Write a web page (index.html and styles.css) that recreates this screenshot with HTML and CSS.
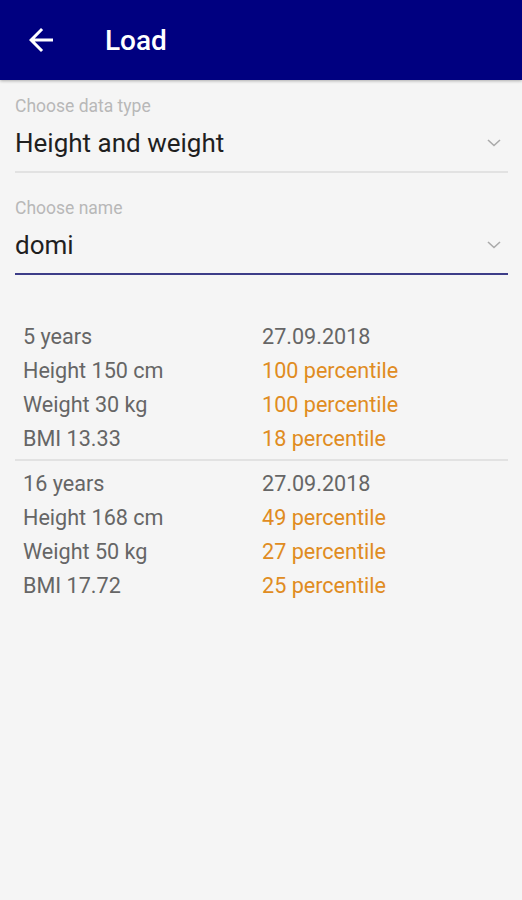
FILE: index.html
```html
<!DOCTYPE html>
<html>
<head>
<meta charset="utf-8">
<link rel="stylesheet" href="styles.css">
</head>
<body>
<header class="appbar">
  <svg class="back" width="36" height="36" viewBox="0 0 24 24"><path d="M20 11H7.83l5.59-5.59L12 4l-8 8 8 8 1.41-1.41L7.83 13H20v-2z" fill="#fff"/></svg>
  <h1 class="title">Load</h1>
</header>
<main class="content">
  <div class="field">
    <div class="label">Choose data type</div>
    <div class="value-row">
      <span class="value">Height and weight</span>
      <svg class="chev" width="14" height="8" viewBox="0 0 14 8"><path d="M1 1l6 5.5L13 1" fill="none" stroke="#aaa" stroke-width="1.6"/></svg>
    </div>
    <div class="line"></div>
  </div>
  <div class="field">
    <div class="label">Choose name</div>
    <div class="value-row">
      <span class="value">domi</span>
      <svg class="chev" width="14" height="8" viewBox="0 0 14 8"><path d="M1 1l6 5.5L13 1" fill="none" stroke="#aaa" stroke-width="1.6"/></svg>
    </div>
    <div class="line active"></div>
  </div>
  <section class="results">
    <div class="entry">
      <span class="k">5 years</span><span class="k">27.09.2018</span>
      <span class="k">Height 150 cm</span><span class="p">100 percentile</span>
      <span class="k">Weight 30 kg</span><span class="p">100 percentile</span>
      <span class="k">BMI 13.33</span><span class="p">18 percentile</span>
    </div>
    <div class="sep"></div>
    <div class="entry">
      <span class="k">16 years</span><span class="k">27.09.2018</span>
      <span class="k">Height 168 cm</span><span class="p">49 percentile</span>
      <span class="k">Weight 50 kg</span><span class="p">27 percentile</span>
      <span class="k">BMI 17.72</span><span class="p">25 percentile</span>
    </div>
  </section>
</main>
</body>
</html>
```
FILE: styles.css
```css
html, body { margin: 0; padding: 0; }
body {
  background: #f5f5f5;
  font-family: Roboto, "Noto Sans", sans-serif;
  width: 522px;
  height: 900px;
}
.appbar {
  height: 80px;
  background: #000080;
  display: flex;
  align-items: center;
  box-shadow: 0 1px 3px rgba(0,0,0,0.3);
}
.back { margin-left: 23px; flex: none; }
.title {
  margin: 0 0 0 46px;
  color: #fff;
  font-size: 28px;
  font-weight: 500;
}
.content { padding: 0 14px 0 15px; }
.field { display: flex; flex-direction: column; }
.field:first-child { padding-top: 16px; }
.field + .field { padding-top: 25px; }
.label {
  font-size: 17.5px;
  line-height: 20px;
  color: #b8b8b8;
}
.value-row {
  display: flex;
  align-items: center;
  justify-content: space-between;
  height: 52px;
  margin-top: 1px;
}
.value {
  font-size: 26px;
  color: #1f1f1f;
}
.chev { margin-right: 7px; }
.line { height: 2px; background: #e2e2e2; margin-top: 2px; }
.line.active { background: #3d3d88; }
.results { padding-top: 45px; }
.entry {
  display: grid;
  grid-template-columns: 239px 1fr;
  padding-left: 8px;
  font-size: 21.6px;
  line-height: 34px;
}
.k { color: #666666; }
.p { color: #e08c22; }
.sep { height: 2px; background: #e2e2e2; margin: 3px 0 6px; }
```
